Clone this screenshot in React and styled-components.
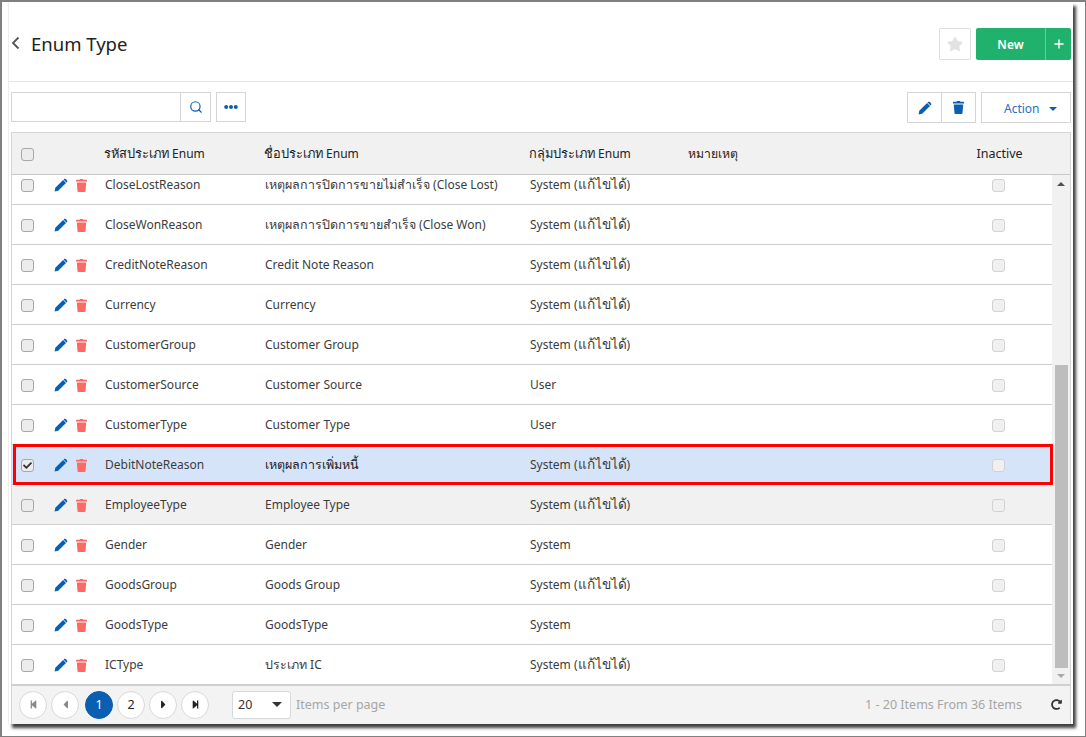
import styled, { createGlobalStyle } from 'styled-components';
import { FaStar, FaEllipsisH, FaStepBackward, FaStepForward, FaCaretLeft, FaCaretRight, FaRedoAlt, FaCheck } from 'react-icons/fa';
import { Plus, Search } from 'lucide-react';

const GlobalStyle = createGlobalStyle`
  html, body {
    margin: 0;
    padding: 0;
    background: #fff;
    font-family: 'Noto Sans', Tahoma, sans-serif;
    font-size: 12px;
    color: #3c3c3c;
  }
  * { box-sizing: border-box; }
`;

const Frame = styled.div`
  width: 1086px;
  height: 737px;
  border: 1px solid #808080;
  border-width: 2px 1px 1px 2px;
  padding-left: 7px;
  overflow: hidden;
`;

const Window = styled.div`
  width: 1064px;
  height: 722px;
  background: #fff;
  padding: 0 2px;
  display: flex;
  flex-direction: column;
  box-shadow: 3px 4px 3px rgba(0, 0, 0, 0.75), -1px 0 1px rgba(0, 0, 0, 0.06);
`;

const Header = styled.div`
  height: 80px;
  margin: 0 -2px;
  padding: 0 2px;
  border-bottom: 1px solid #e5e5e5;
  display: flex;
  align-items: center;
  justify-content: space-between;
  flex: none;
`;

const TitleWrap = styled.div`
  display: flex;
  align-items: center;
  padding-top: 3px;
`;

const Title = styled.h1`
  margin: 0 0 0 11px;
  font-size: 18.5px;
  font-weight: 400;
  color: #222;
`;

const Actions = styled.div`
  display: flex;
  align-items: center;
  padding-top: 4px;
`;

const StarButton = styled.button`
  width: 32px;
  height: 32px;
  padding: 0;
  margin-right: 5px;
  background: #fff;
  border: 1px solid #ddd;
  border-radius: 2px;
  color: #e2e2e2;
  font-size: 16px;
  display: flex;
  align-items: center;
  justify-content: center;
`;

const GreenButton = styled.button`
  height: 32px;
  width: ${p => p.$w}px;
  padding: 1px 0 0;
  border: 0;
  background: #20b16c;
  color: #fff;
  font: 600 12px 'Noto Sans', sans-serif;
  border-radius: ${p => p.$radius};
  border-left: ${p => (p.$split ? '1px solid #5fd098' : '0')};
  display: flex;
  align-items: center;
  justify-content: center;
`;

const Toolbar = styled.div`
  height: 50px;
  flex: none;
  display: flex;
  align-items: flex-start;
  justify-content: space-between;
  padding-top: 10px;
`;

const Group = styled.div`
  display: flex;
`;

const SearchBox = styled.div`
  width: 200px;
  height: 30px;
  border: 1px solid #d5d5d5;
  display: flex;
  justify-content: flex-end;
  margin-right: 5px;
`;

const IconButton = styled.button`
  width: ${p => p.$w || 30}px;
  height: ${p => p.$h || 30}px;
  padding: 0;
  background: #fff;
  border: 1px solid #d5d5d5;
  margin-left: ${p => p.$join ? '-1px' : '0'};
  color: #0a5fb0;
  display: flex;
  align-items: center;
  justify-content: center;
`;

const SearchButton = styled(IconButton)`
  border-width: 0 0 0 1px;
  height: 28px;
`;

const ActionButton = styled.button`
  width: 90px;
  height: 31px;
  margin-left: 5px;
  padding: 2px 13px 0 22px;
  background: #fff;
  border: 1px solid #d5d5d5;
  color: #2a6fc0;
  font: 400 12px 'Noto Sans', sans-serif;
  display: flex;
  align-items: center;
  justify-content: space-between;
`;

const Caret = styled.span`
  border-left: ${p => p.$w || 4}px solid transparent;
  border-right: ${p => p.$w || 4}px solid transparent;
  border-top: ${p => p.$w || 4}px solid ${p => p.$color};
`;

const Grid = styled.div`
  flex: 1;
  border: 1px solid #d5d5d5;
  border-bottom: 0;
  display: flex;
  flex-direction: column;
  min-height: 0;
`;

const columns = '40px 52px 160px 265px 159px 1fr 108px';

const HeadRow = styled.div`
  height: 42px;
  flex: none;
  display: grid;
  grid-template-columns: ${columns} 18px;
  align-items: center;
  background: #f1f1f1;
  border-bottom: 1px solid #c8c8c8;
  color: #222;
`;

const HeadCell = styled.div`
  white-space: nowrap;
`;

const InactiveHead = styled(HeadCell)`
  font-size: 12.5px;
  text-align: center;
  padding-left: 3px;
`;

const BodyWrap = styled.div`
  flex: 1;
  display: flex;
  min-height: 0;
`;

const RowsViewport = styled.div`
  flex: 1;
  clip-path: inset(0 -2px 0 0);
`;

const Rows = styled.div`
  margin-top: -10px;
`;

const Row = styled.div`
  height: 40px;
  display: grid;
  grid-template-columns: ${columns};
  align-items: center;
  background: ${p => p.$selected ? '#d6e4f9' : p.$hover ? '#f1f1f1' : '#fff'};
  border-bottom: 1px solid #cfcfcf;
  position: relative;
`;

const SelectedOutline = styled.div`
  position: absolute;
  left: 1px;
  right: -1px;
  top: -1px;
  bottom: -1px;
  border: 3px solid #f00;
  pointer-events: none;
`;

const CheckCell = styled.div`
  display: flex;
  justify-content: center;
  padding: 1px 10px 0 0;
`;

const Box = styled.span`
  width: 13px;
  height: 13px;
  border: 1px solid ${p => p.$faint ? '#d2d2d2' : '#a8a8a8'};
  border-radius: 3px;
  background: ${p => p.$faint ? '#f0f0f0' : '#ececec'};
  color: #333;
  font-size: 9px;
  display: flex;
  align-items: center;
  justify-content: center;
`;

const ActionCell = styled.div`
  display: flex;
  align-items: center;
  padding: 1px 0 0 2px;
  gap: 8px;
`;

const Cell = styled.div`
  padding-left: 1px;
  white-space: nowrap;
  color: ${p => p.$dark ? '#222' : 'inherit'};
`;

const ThaiText = styled.span`
  font-size: ${p => p.$size}px;
  line-height: 1;
`;

const CenterCell = styled.div`
  display: flex;
  justify-content: center;
  padding: 1px 0 0 1px;
`;

const ScrollTrack = styled.div`
  width: 18px;
  flex: none;
  background: #f1f1f1;
  display: flex;
  flex-direction: column;
  align-items: center;
`;

const ScrollArrow = styled.div`
  height: ${p => p.$down ? 16 : 18}px;
  flex: none;
  display: flex;
  align-items: center;
  justify-content: center;
  &::after {
    content: '';
    border-left: 4px solid transparent;
    border-right: 4px solid transparent;
    ${p => p.$down ? 'border-top: 4px solid #a8a8a8;' : 'border-bottom: 4px solid #505050;'}
  }
`;

const ScrollGap = styled.div`
  height: 172px;
  flex: none;
`;

const ScrollThumb = styled.div`
  width: 13px;
  height: 303px;
  flex: none;
  background: #bdbdbd;
`;

const Footer = styled.div`
  height: 40px;
  flex: none;
  background: #f3f3f3;
  border-top: 2px solid #cfcfcf;
  display: flex;
  align-items: center;
  padding: 0 8px 1px 7px;
  color: #a6a6a6;
  font-size: 12.5px;
`;

const Pager = styled.div`
  display: flex;
  gap: 4px;
  margin-right: 23px;
`;

const PageButton = styled.button`
  width: 28px;
  height: 28px;
  padding: 0;
  margin-left: ${p => p.$active ? '2px' : '0'};
  border-radius: 50%;
  border: 1px solid ${p => p.$active ? '#0a5fb0' : '#d8d8d8'};
  background: ${p => p.$active ? '#0a5fb0' : '#fff'};
  color: ${p => p.$active ? '#fff' : p.$muted ? '#888' : '#222'};
  font: 400 12.5px 'Noto Sans', sans-serif;
  display: flex;
  align-items: center;
  justify-content: center;
`;

const PageSize = styled.div`
  width: 59px;
  height: 28px;
  background: #fff;
  border: 1px solid #d8d8d8;
  border-radius: 3px;
  padding: 0 8px 0 5px;
  color: #333;
  display: flex;
  align-items: center;
  justify-content: space-between;
  margin-right: 5px;
`;

const Summary = styled.div`
  margin-left: auto;
  margin-right: 29px;
`;

const Chevron = () => (
  <svg width="9" height="14" viewBox="0 0 9 14" fill="none" stroke="#555" strokeWidth="1.800">
    <path d="M7.500 1.500L2 7l5.500 5.500" />
  </svg>
);

const Pencil = ({ size = 14 }) => (
  <svg width={size} height={size} viewBox="0 0 24 24" fill="#0a5fb0">
    <path d="M1 23l1.200-6.200L15.600 3.400l5 5L7.200 21.800 1 23zM17.200 1.800c.9-.9 2.200-.9 3.100 0l1.900 1.900c.9.9.9 2.200 0 3.100l-.8.8-5-5 .8-.8z" />
  </svg>
);

const Trash = ({ color }) => (
  <svg width="11" height="13" viewBox="0 0 11 13" fill={color}>
    <path d="M4 0h3l.4.8h3.100c.3 0 .5.200.5.500V2.500H0V1.300C0 1 .2.800.5.800h3.100L4 0zM.8 3.400h9.400l-.7 8.700c0 .5-.4.900-.9.900H2.400c-.5 0-.9-.4-.9-.9L.8 3.400z" />
  </svg>
);

// Thai runs are set a bit larger than the latin text around them
const mixed = (text, size = 12.5) => text.split(/([\u0E00-\u0E7F]+(?: [\u0E00-\u0E7F]+)*)/).map((part, i) => (
  i % 2 ? <ThaiText key={i} $size={size}>{part}</ThaiText> : part
));

const data = [
  ['CloseLostReason', 'เหตุผลการปิดการขายไม่สำเร็จ (Close Lost)', 'System (แก้ไขได้)'],
  ['CloseWonReason', 'เหตุผลการปิดการขายสำเร็จ (Close Won)', 'System (แก้ไขได้)'],
  ['CreditNoteReason', 'Credit Note Reason', 'System (แก้ไขได้)'],
  ['Currency', 'Currency', 'System (แก้ไขได้)'],
  ['CustomerGroup', 'Customer Group', 'System (แก้ไขได้)'],
  ['CustomerSource', 'Customer Source', 'User'],
  ['CustomerType', 'Customer Type', 'User'],
  ['DebitNoteReason', 'เหตุผลการเพิ่มหนี้', 'System (แก้ไขได้)'],
  ['EmployeeType', 'Employee Type', 'System (แก้ไขได้)'],
  ['Gender', 'Gender', 'System'],
  ['GoodsGroup', 'Goods Group', 'System (แก้ไขได้)'],
  ['GoodsType', 'GoodsType', 'System'],
  ['ICType', 'ประเภท IC', 'System (แก้ไขได้)'],
];

function App() {
  return (
    <Frame>
      <GlobalStyle />
      <Window>
        <Header>
          <TitleWrap>
            <Chevron />
            <Title>Enum Type</Title>
          </TitleWrap>
          <Actions>
            <StarButton><FaStar /></StarButton>
            <GreenButton $w={69} $radius="2px 0 0 2px">New</GreenButton>
            <GreenButton $w={26} $split $radius="0 2px 2px 0"><Plus size={14} strokeWidth={2.4} /></GreenButton>
          </Actions>
        </Header>
        <Toolbar>
          <Group>
            <SearchBox><SearchButton><Search size={14} strokeWidth={2} /></SearchButton></SearchBox>
            <IconButton><FaEllipsisH size={14} /></IconButton>
          </Group>
          <Group>
            <IconButton $w={35} $h={31}><Pencil /></IconButton>
            <IconButton $w={35} $h={31} $join><Trash color="#0a5fb0" /></IconButton>
            <ActionButton>Action <Caret $color="#0a5fb0" /></ActionButton>
          </Group>
        </Toolbar>
        <Grid>
          <HeadRow>
            <CheckCell><Box /></CheckCell>
            <span />
            <HeadCell>{mixed('รหัสประเภท Enum', 12.8)}</HeadCell>
            <HeadCell>{mixed('ชื่อประเภท Enum', 12.8)}</HeadCell>
            <HeadCell>{mixed('กลุ่มประเภท Enum', 12.8)}</HeadCell>
            <HeadCell>{mixed('หมายเหตุ', 12.2)}</HeadCell>
            <InactiveHead>Inactive</InactiveHead>
          </HeadRow>
          <BodyWrap>
            <RowsViewport>
              <Rows>
                {data.map(row => {
                  const selected = row[0] === 'DebitNoteReason';
                  return (
                    <Row key={row[0]} $selected={selected} $hover={row[0] === 'EmployeeType'}>
                      <CheckCell><Box>{selected && <FaCheck />}</Box></CheckCell>
                      <ActionCell><Pencil /><Trash color="#fb6a63" /></ActionCell>
                      <Cell>{row[0]}</Cell>
                      <Cell $dark={selected}>{mixed(row[1])}</Cell>
                      <Cell>{mixed(row[2], 13.6)}</Cell>
                      <span />
                      <CenterCell><Box $faint /></CenterCell>
                      {selected && <SelectedOutline />}
                    </Row>
                  );
                })}
              </Rows>
            </RowsViewport>
            <ScrollTrack>
              <ScrollArrow />
              <ScrollGap />
              <ScrollThumb />
              <ScrollArrow $down />
            </ScrollTrack>
          </BodyWrap>
          <Footer>
            <Pager>
              <PageButton $muted><FaStepBackward size={9} /></PageButton>
              <PageButton $muted><FaCaretLeft size={13} /></PageButton>
              <PageButton $active>1</PageButton>
              <PageButton>2</PageButton>
              <PageButton><FaCaretRight size={13} /></PageButton>
              <PageButton><FaStepForward size={9} /></PageButton>
            </Pager>
            <PageSize>20 <Caret $w={5} $color="#333" /></PageSize>
            Items per page
            <Summary>1 - 20 Items From 36 Items</Summary>
            <FaRedoAlt size={11} color="#333" />
          </Footer>
        </Grid>
      </Window>
    </Frame>
  );
}

export default App;
